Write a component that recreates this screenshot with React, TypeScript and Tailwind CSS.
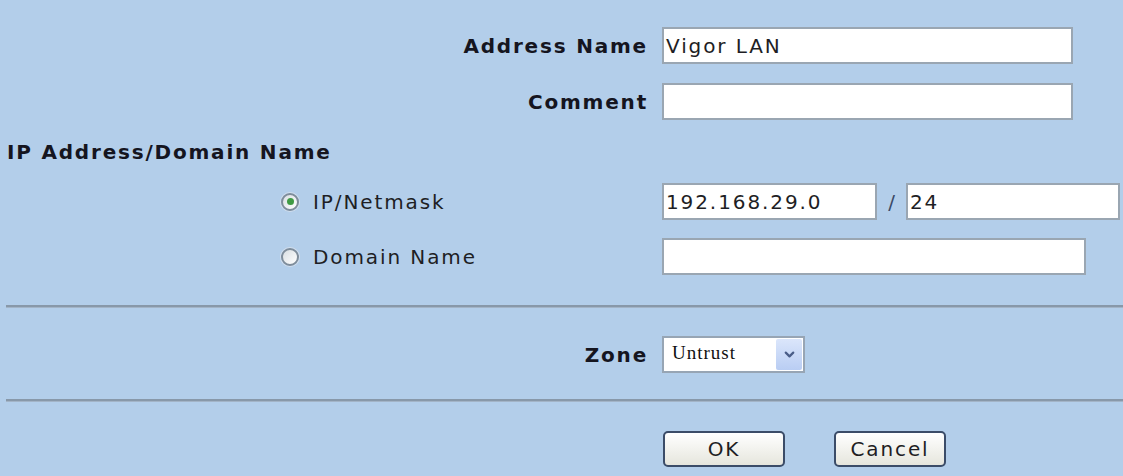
import React from "react";
import { ChevronDown } from "lucide-react";

const font = "font-['DejaVu_Sans',sans-serif]";
const label = "text-[20px] font-bold tracking-[1.8px] text-[#15151f]";
const plain = "text-[20px] tracking-[1.9px] text-[#1e1e24]";
const field =
  "h-[37px] border-2 border-[#9aa6b2] bg-white pl-[2px] flex items-center " + plain;

const Radio = ({ checked }: { checked?: boolean }) => (
  <div className="w-[18px] h-[18px] rounded-full border-2 border-[#7f8d9b] bg-gradient-to-br from-[#d9dee2] to-white flex items-center justify-center shadow-[0_0_0_1px_#d2deec]">
    {checked && <div className="w-[7px] h-[7px] rounded-full bg-[#3f9a43]" />}
  </div>
);

const Divider = () => (
  <div className="ml-[6px] h-[3px] border-t-2 border-[#8898a9] bg-[#a3b4c7]" />
);

export default function App() {
  return (
    <div className={`w-[1123px] h-[476px] bg-[#b3ceea] pt-[27px] overflow-hidden ${font}`}>
      {/* name + comment */}
      <div className="flex h-[37px] items-center">
        <span className={`w-[648px] text-right ${label}`}>Address Name</span>
        <div className={`ml-[14px] w-[411px] ${field}`}>Vigor LAN</div>
      </div>
      <div className="flex h-[37px] items-center mt-[19px]">
        <span className={`w-[648px] text-right ${label}`}>Comment</span>
        <div className={`ml-[14px] w-[411px] ${field}`} />
      </div>

      {/* address type */}
      <div className={`mt-[20px] h-[24px] pl-[7px] flex items-center ${label}`}>
        IP Address/Domain Name
      </div>
      <div className="flex h-[37px] items-center mt-[19px]">
        <div className="w-[662px] pl-[281px] flex items-center">
          <Radio checked />
          <span className={`ml-[14px] ${plain}`}>IP/Netmask</span>
        </div>
        <div className={`w-[215px] ${field}`}>192.168.29.0</div>
        <span className={`w-[29px] text-center ${plain} tracking-normal text-[#3a4a66]`}>/</span>
        <div className={`w-[214px] ${field}`}>24</div>
      </div>
      <div className="flex h-[37px] items-center mt-[18px]">
        <div className="w-[662px] pl-[281px] flex items-center">
          <Radio />
          <span className={`ml-[14px] ${plain}`}>Domain Name</span>
        </div>
        <div className={`w-[424px] ${field}`} />
      </div>

      <div className="mt-[30px]">
        <Divider />
      </div>

      {/* zone */}
      <div className="flex h-[37px] items-center mt-[28px]">
        <span className={`w-[648px] text-right ${label}`}>Zone</span>
        <div className="ml-[14px] w-[143px] h-[37px] border-2 border-[#97a5b4] bg-white flex items-stretch">
          <span className="flex-1 pl-[8px] pt-[1px] text-[19px] tracking-[1px] text-[#111] font-['Liberation_Serif',serif]">
            Untrust
          </span>
          <div className="w-[26px] my-[1px] mr-[1px] rounded-[2px] bg-gradient-to-b from-[#dbe6fb] to-[#b9cdf3] flex items-center justify-center">
            <ChevronDown size={15} strokeWidth={3.5} color="#4a5d88" />
          </div>
        </div>
      </div>

      <div className="mt-[26px]">
        <Divider />
      </div>

      {/* actions */}
      <div className="flex mt-[29px] pl-[663px] gap-[49px]">
        <button className={`w-[122px] h-[36px] rounded-[5px] border-2 border-[#3b4c68] bg-gradient-to-b from-white to-[#e6e6dd] ${plain} tracking-[1.5px]`}>
          OK
        </button>
        <button className={`w-[112px] h-[36px] rounded-[5px] border-2 border-[#3b4c68] bg-gradient-to-b from-white to-[#e6e6dd] ${plain} tracking-[1.5px]`}>
          Cancel
        </button>
      </div>
    </div>
  );
}
